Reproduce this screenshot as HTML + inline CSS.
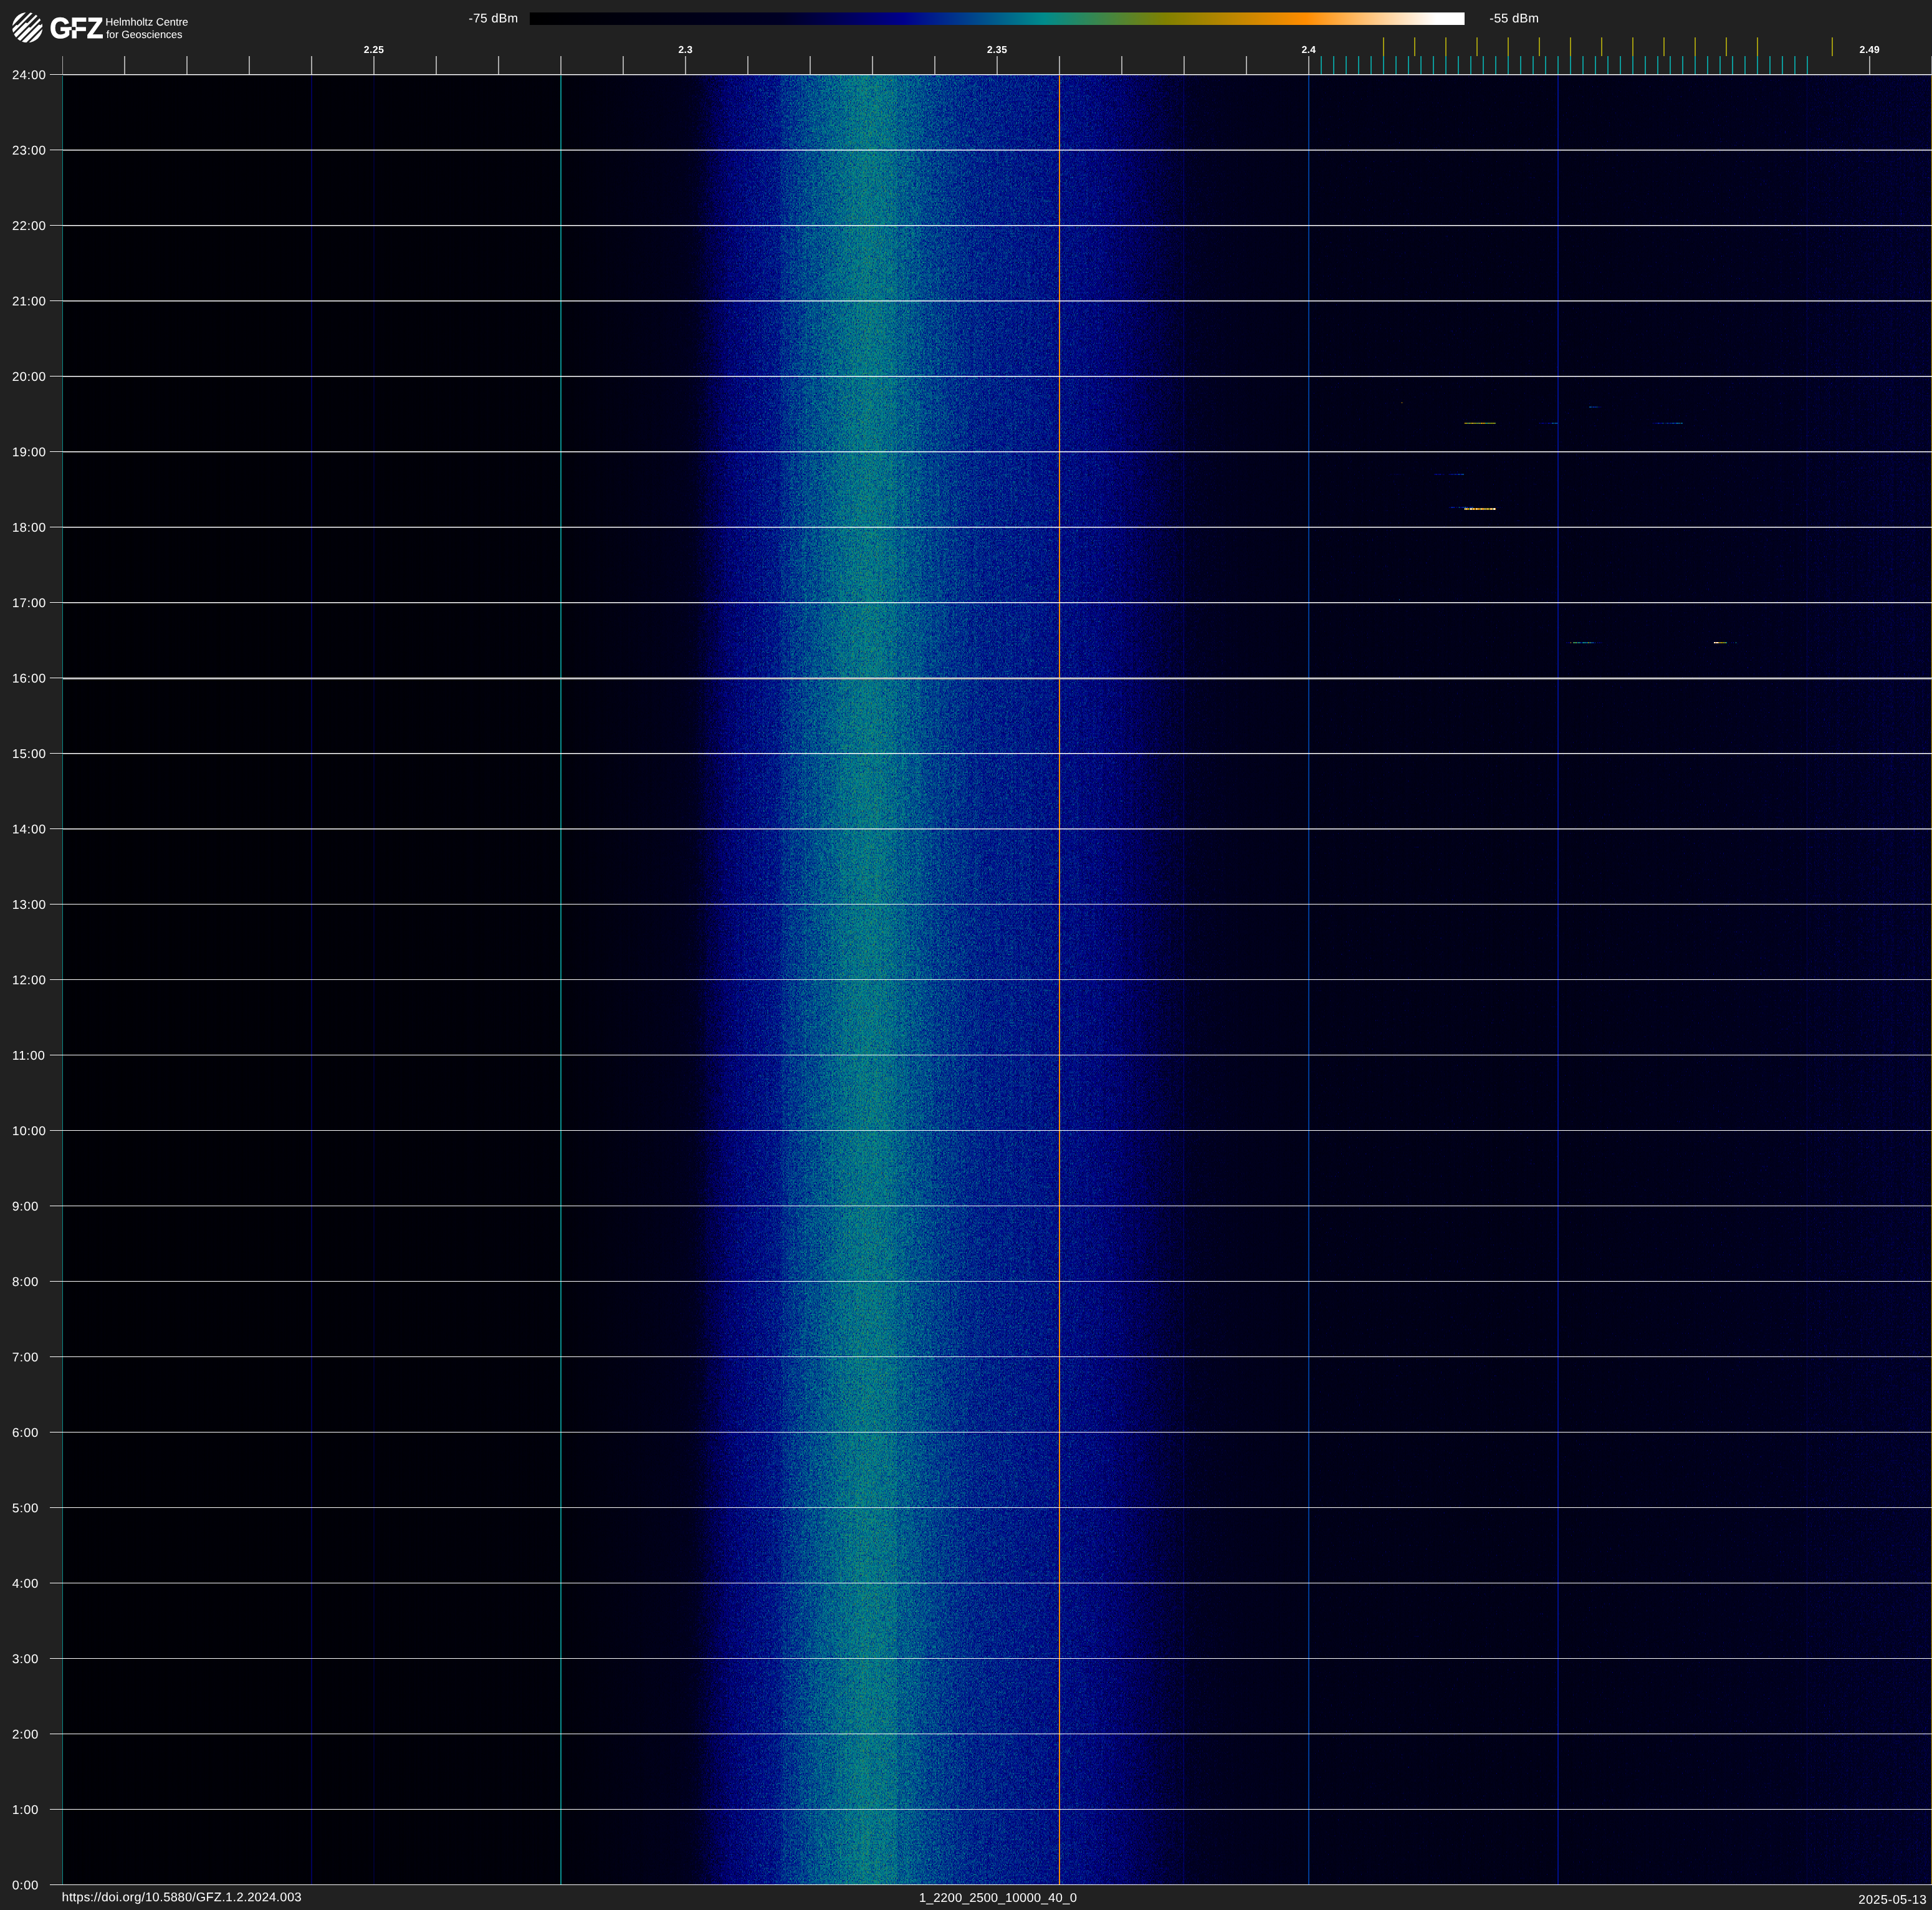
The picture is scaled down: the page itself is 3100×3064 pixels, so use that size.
<!DOCTYPE html>
<html lang="en"><head><meta charset="utf-8"><title>Spectrogram 1_2200_2500_10000_40_0 2025-05-13</title>
<style>html,body{margin:0;padding:0;background:#212121}body{width:3100px;height:3064px;overflow:hidden}svg{display:block}text{font-family:"Liberation Sans", sans-serif;fill:#fff;text-rendering:geometricPrecision}</style></head><body>
<svg width="3100" height="3064" viewBox="0 0 3100 3064">
<defs>
<linearGradient id="cb" x1="0" y1="0" x2="1" y2="0">
<stop offset="0.0000" stop-color="#000000"/>
<stop offset="0.2700" stop-color="#000024"/>
<stop offset="0.4000" stop-color="#00008b"/>
<stop offset="0.5500" stop-color="#008b8b"/>
<stop offset="0.6800" stop-color="#808000"/>
<stop offset="0.8300" stop-color="#ff8c00"/>
<stop offset="0.9700" stop-color="#ffffff"/>
<stop offset="1.0000" stop-color="#ffffff"/>
</linearGradient>
<linearGradient id="prof" gradientUnits="userSpaceOnUse" x1="100" y1="0" x2="3100" y2="0">
<stop offset="0.00000" stop-color="rgb(1,20,153)"/>
<stop offset="0.13333" stop-color="rgb(2,26,153)"/>
<stop offset="0.26667" stop-color="rgb(3,51,178)"/>
<stop offset="0.28333" stop-color="rgb(6,76,178)"/>
<stop offset="0.30000" stop-color="rgb(8,115,178)"/>
<stop offset="0.32667" stop-color="rgb(9,178,178)"/>
<stop offset="0.33733" stop-color="rgb(12,230,128)"/>
<stop offset="0.34667" stop-color="rgb(26,255,128)"/>
<stop offset="0.35800" stop-color="rgb(41,255,128)"/>
<stop offset="0.37000" stop-color="rgb(48,255,128)"/>
<stop offset="0.38367" stop-color="rgb(54,255,128)"/>
<stop offset="0.38500" stop-color="rgb(59,255,128)"/>
<stop offset="0.40000" stop-color="rgb(69,255,128)"/>
<stop offset="0.41333" stop-color="rgb(76,255,128)"/>
<stop offset="0.42833" stop-color="rgb(83,255,128)"/>
<stop offset="0.44600" stop-color="rgb(79,255,128)"/>
<stop offset="0.44700" stop-color="rgb(73,255,128)"/>
<stop offset="0.44867" stop-color="rgb(73,255,128)"/>
<stop offset="0.44967" stop-color="rgb(75,255,128)"/>
<stop offset="0.46667" stop-color="rgb(66,255,128)"/>
<stop offset="0.48267" stop-color="rgb(60,255,128)"/>
<stop offset="0.48367" stop-color="rgb(59,255,128)"/>
<stop offset="0.50000" stop-color="rgb(56,255,128)"/>
<stop offset="0.53333" stop-color="rgb(50,255,128)"/>
<stop offset="0.55000" stop-color="rgb(46,255,128)"/>
<stop offset="0.56667" stop-color="rgb(38,255,128)"/>
<stop offset="0.58333" stop-color="rgb(27,255,128)"/>
<stop offset="0.59933" stop-color="rgb(21,230,128)"/>
<stop offset="0.60033" stop-color="rgb(20,217,128)"/>
<stop offset="0.61667" stop-color="rgb(15,204,153)"/>
<stop offset="0.63333" stop-color="rgb(12,178,178)"/>
<stop offset="0.66667" stop-color="rgb(10,140,204)"/>
<stop offset="0.80000" stop-color="rgb(8,140,204)"/>
<stop offset="0.86667" stop-color="rgb(10,166,204)"/>
<stop offset="0.90000" stop-color="rgb(13,178,204)"/>
<stop offset="0.93300" stop-color="rgb(14,191,204)"/>
<stop offset="0.93367" stop-color="rgb(15,204,204)"/>
<stop offset="0.96667" stop-color="rgb(18,204,204)"/>
<stop offset="1.00000" stop-color="rgb(20,204,204)"/>
</linearGradient>
<filter id="spec" filterUnits="userSpaceOnUse" x="100" y="120" width="3000" height="2903" color-interpolation-filters="sRGB">
<feColorMatrix in="SourceGraphic" type="matrix" values="1 0 0 0 0 1 0 0 0 0 1 0 0 0 0 0 0 0 0 1" result="P"/>
<feColorMatrix in="SourceGraphic" type="matrix" values="0 1 0 0 0 0 1 0 0 0 0 1 0 0 0 0 0 0 0 1" result="Am"/>
<feTurbulence type="fractalNoise" baseFrequency="1.618 0.809" numOctaves="1" seed="7" result="n"/>
<feColorMatrix in="n" type="matrix" values="1 0 0 0 0 1 0 0 0 0 1 0 0 0 0 0 0 0 0 1" result="n1"/>
<feFlood flood-color="#fff" x="100" y="120" width="1" height="1" result="d"/>
<feOffset in="d" dx="0" dy="0" x="100" y="120" width="1" height="2" result="cell"/>
<feTile in="cell" result="mask"/>
<feComposite in="n1" in2="mask" operator="in" result="nm"/>
<feOffset in="nm" dy="1" result="nm2"/>
<feMerge result="ng"><feMergeNode in="nm"/><feMergeNode in="nm2"/></feMerge>
<feTurbulence type="fractalNoise" baseFrequency="0.37 0.0004" numOctaves="2" seed="3" result="s"/>
<feColorMatrix in="s" type="matrix" values="1 0 0 0 0 1 0 0 0 0 1 0 0 0 0 0 0 0 0 1" result="sg"/>
<feComposite in="Am" in2="ng" operator="arithmetic" k1="0.370" k2="0" k3="0" k4="0" result="an"/>
<feComposite in="P" in2="an" operator="arithmetic" k1="0" k2="1" k3="1" k4="0" result="v0"/>
<feColorMatrix in="SourceGraphic" type="matrix" values="0 0 1 0 0 0 0 1 0 0 0 0 1 0 0 0 0 0 0 1" result="Sm"/>
<feComposite in="Sm" in2="sg" operator="arithmetic" k1="0.100" k2="0" k3="0" k4="0" result="as"/>
<feComposite in="v0" in2="as" operator="arithmetic" k1="0" k2="1" k3="1" k4="0" result="v"/>
<feComponentTransfer in="v"><feFuncR type="table" tableValues="0.0000 0.0000 0.0000 0.0000 0.0000 0.0000 0.0000 0.0000 0.0000 0.0000 0.0000 0.0000 0.0000 0.0000 0.0000 0.0000 0.0000 0.0000 0.0000 0.0000 0.0000 0.0000 0.0000 0.0000 0.0000 0.0000 0.0000 0.0000 0.0000 0.0000 0.0000 0.0000 0.0000 0.0000 0.0000 0.0000 0.0000 0.0000 0.0000 0.0000 0.0000 0.0000 0.0000 0.0000 0.0000 0.0000 0.0000 0.0000 0.0000 0.0000 0.0000 0.0000 0.0000 0.0000 0.0000 0.0000 0.0386 0.0772 0.1158 0.1544 0.1931 0.2317 0.2703 0.3089 0.3475 0.3861 0.4247 0.4633 0.5020 0.5352 0.5684 0.6016 0.6348 0.6680 0.7012 0.7344 0.7676 0.8008 0.8340 0.8672 0.9004 0.9336 0.9668 1.0000 1.0000 1.0000 1.0000 1.0000 1.0000 1.0000 1.0000 1.0000 1.0000 1.0000 1.0000 1.0000 1.0000 1.0000 1.0000 1.0000 1.0000"/><feFuncG type="table" tableValues="0.0000 0.0000 0.0000 0.0000 0.0000 0.0000 0.0000 0.0000 0.0000 0.0000 0.0000 0.0000 0.0000 0.0000 0.0000 0.0000 0.0000 0.0000 0.0000 0.0000 0.0000 0.0000 0.0000 0.0000 0.0000 0.0000 0.0000 0.0000 0.0000 0.0000 0.0000 0.0000 0.0000 0.0000 0.0000 0.0000 0.0000 0.0000 0.0000 0.0000 0.0000 0.0363 0.0727 0.1090 0.1454 0.1817 0.2180 0.2544 0.2907 0.3271 0.3634 0.3997 0.4361 0.4724 0.5088 0.5451 0.5418 0.5385 0.5351 0.5318 0.5285 0.5252 0.5219 0.5186 0.5152 0.5119 0.5086 0.5053 0.5020 0.5051 0.5082 0.5114 0.5145 0.5176 0.5208 0.5239 0.5271 0.5302 0.5333 0.5365 0.5396 0.5427 0.5459 0.5490 0.5812 0.6134 0.6457 0.6779 0.7101 0.7423 0.7745 0.8067 0.8389 0.8711 0.9034 0.9356 0.9678 1.0000 1.0000 1.0000 1.0000"/><feFuncB type="table" tableValues="0.0000 0.0052 0.0105 0.0157 0.0209 0.0261 0.0314 0.0366 0.0418 0.0471 0.0523 0.0575 0.0627 0.0680 0.0732 0.0784 0.0837 0.0889 0.0941 0.0993 0.1046 0.1098 0.1150 0.1203 0.1255 0.1307 0.1359 0.1412 0.1722 0.2033 0.2344 0.2655 0.2965 0.3276 0.3587 0.3897 0.4208 0.4519 0.4830 0.5140 0.5451 0.5451 0.5451 0.5451 0.5451 0.5451 0.5451 0.5451 0.5451 0.5451 0.5451 0.5451 0.5451 0.5451 0.5451 0.5451 0.5032 0.4612 0.4193 0.3774 0.3354 0.2935 0.2516 0.2097 0.1677 0.1258 0.0839 0.0419 0.0000 0.0000 0.0000 0.0000 0.0000 0.0000 0.0000 0.0000 0.0000 0.0000 0.0000 0.0000 0.0000 0.0000 0.0000 0.0000 0.0714 0.1429 0.2143 0.2857 0.3571 0.4286 0.5000 0.5714 0.6429 0.7143 0.7857 0.8571 0.9286 1.0000 1.0000 1.0000 1.0000"/></feComponentTransfer>
</filter>
<linearGradient id="spg" gradientUnits="userSpaceOnUse" x1="2100" y1="0" x2="3100" y2="0">
<stop offset="0.0000" stop-color="#fff" stop-opacity="0.00"/>
<stop offset="0.0100" stop-color="#fff" stop-opacity="0.60"/>
<stop offset="0.5500" stop-color="#fff" stop-opacity="0.60"/>
<stop offset="0.7000" stop-color="#fff" stop-opacity="0.85"/>
<stop offset="0.7990" stop-color="#fff" stop-opacity="0.95"/>
<stop offset="0.8010" stop-color="#fff" stop-opacity="1.00"/>
<stop offset="1.0000" stop-color="#fff" stop-opacity="1.00"/>
</linearGradient>
<filter id="speck" filterUnits="userSpaceOnUse" x="2100" y="120" width="1000" height="2903" color-interpolation-filters="sRGB">
<feTurbulence type="fractalNoise" baseFrequency="1.618 0.809" numOctaves="1" seed="23" result="n"/>
<feColorMatrix in="n" type="matrix" values="0 0 0 0 0  0 0 0 0 0  0 0 0 0 0.6  8 0 0 0 -5.6" result="c"/>
<feFlood flood-color="#fff" x="2100" y="120" width="1" height="1" result="d"/>
<feOffset in="d" dx="0" dy="0" x="2100" y="120" width="1" height="2" result="cell"/>
<feTile in="cell" result="mask"/>
<feComposite in="c" in2="mask" operator="in" result="cm"/>
<feOffset in="cm" dy="1" result="cm2"/>
<feMerge result="cc"><feMergeNode in="cm"/><feMergeNode in="cm2"/></feMerge>
<feComposite in="cc" in2="SourceGraphic" operator="in"/>
</filter>
<clipPath id="lc"><circle cx="44" cy="44" r="24.3"/></clipPath>
</defs>
<rect x="100" y="120" width="3000" height="2903" fill="url(#prof)" filter="url(#spec)"/>
<rect x="2100" y="120" width="1000" height="2903" fill="url(#spg)" filter="url(#speck)"/>
<rect x="100" y="121" width="1" height="2902" fill="#0a8c8c"/>
<rect x="499" y="121" width="2" height="2902" fill="#00005a"/>
<rect x="599" y="121" width="2" height="2902" fill="#000030"/>
<rect x="899" y="121" width="2" height="2902" fill="#0a8f8f"/>
<rect x="1699" y="121" width="2" height="2902" fill="#f08c00"/>
<rect x="1899" y="121" width="1" height="2902" fill="#000078"/>
<rect x="2099" y="121" width="2" height="2902" fill="#003c96"/>
<rect x="2499" y="121" width="2" height="2902" fill="#000f8c"/>
<rect x="2899" y="121" width="1" height="2902" fill="#000050"/>
<rect x="3099" y="121" width="1" height="2902" fill="#c8a000"/>
<rect x="2350" y="678" width="1" height="2" fill="#de8900"/>
<rect x="2351" y="678" width="1" height="2" fill="#75810c"/>
<rect x="2352" y="678" width="1" height="2" fill="#8a8100"/>
<rect x="2353" y="678" width="1" height="2" fill="#b78500"/>
<rect x="2354" y="678" width="1" height="2" fill="#1b896d"/>
<rect x="2355" y="678" width="1" height="2" fill="#8e8100"/>
<rect x="2356" y="678" width="1" height="2" fill="#028b89"/>
<rect x="2357" y="678" width="1" height="2" fill="#e58a00"/>
<rect x="2358" y="678" width="1" height="2" fill="#278861"/>
<rect x="2359" y="678" width="1" height="2" fill="#948200"/>
<rect x="2360" y="678" width="1" height="2" fill="#838000"/>
<rect x="2361" y="678" width="1" height="2" fill="#a18300"/>
<rect x="2362" y="678" width="1" height="2" fill="#ff9d25"/>
<rect x="2363" y="678" width="1" height="2" fill="#458540"/>
<rect x="2364" y="678" width="1" height="2" fill="#df8900"/>
<rect x="2365" y="678" width="1" height="2" fill="#39864d"/>
<rect x="2366" y="678" width="1" height="2" fill="#a18300"/>
<rect x="2367" y="678" width="1" height="2" fill="#938200"/>
<rect x="2368" y="678" width="1" height="2" fill="#68821a"/>
<rect x="2369" y="678" width="1" height="2" fill="#3a864c"/>
<rect x="2370" y="678" width="1" height="2" fill="#a08300"/>
<rect x="2371" y="678" width="1" height="2" fill="#00888b"/>
<rect x="2372" y="678" width="1" height="2" fill="#858100"/>
<rect x="2373" y="678" width="1" height="2" fill="#d78800"/>
<rect x="2374" y="678" width="1" height="2" fill="#268862"/>
<rect x="2375" y="678" width="1" height="2" fill="#408545"/>
<rect x="2376" y="678" width="1" height="2" fill="#c68700"/>
<rect x="2377" y="678" width="1" height="2" fill="#ff8d03"/>
<rect x="2378" y="678" width="1" height="2" fill="#788109"/>
<rect x="2379" y="678" width="1" height="2" fill="#b88500"/>
<rect x="2380" y="678" width="1" height="2" fill="#c88700"/>
<rect x="2381" y="678" width="1" height="2" fill="#8c8100"/>
<rect x="2382" y="678" width="1" height="2" fill="#cb8700"/>
<rect x="2383" y="678" width="1" height="2" fill="#328755"/>
<rect x="2384" y="678" width="1" height="2" fill="#3a864c"/>
<rect x="2385" y="678" width="1" height="2" fill="#038b88"/>
<rect x="2386" y="678" width="1" height="2" fill="#418544"/>
<rect x="2387" y="678" width="1" height="2" fill="#418545"/>
<rect x="2388" y="678" width="1" height="2" fill="#958200"/>
<rect x="2389" y="678" width="1" height="2" fill="#5f8324"/>
<rect x="2390" y="678" width="1" height="2" fill="#528432"/>
<rect x="2391" y="678" width="1" height="2" fill="#638320"/>
<rect x="2392" y="678" width="1" height="2" fill="#718110"/>
<rect x="2393" y="678" width="1" height="2" fill="#928200"/>
<rect x="2394" y="678" width="1" height="2" fill="#67821b"/>
<rect x="2395" y="678" width="1" height="2" fill="#6c8216"/>
<rect x="2396" y="678" width="1" height="2" fill="#8f8100"/>
<rect x="2397" y="678" width="1" height="2" fill="#b98500"/>
<rect x="2398" y="678" width="1" height="2" fill="#268862"/>
<rect x="2399" y="678" width="1" height="2" fill="#6a8218"/>
<rect x="2469" y="678" width="1" height="2" fill="#00002e"/>
<rect x="2470" y="678" width="1" height="2" fill="#00078b"/>
<rect x="2471" y="678" width="1" height="2" fill="#000023"/>
<rect x="2472" y="678" width="1" height="2" fill="#00004e"/>
<rect x="2473" y="678" width="1" height="2" fill="#000042"/>
<rect x="2474" y="678" width="1" height="2" fill="#000078"/>
<rect x="2475" y="678" width="1" height="2" fill="#00007d"/>
<rect x="2476" y="678" width="1" height="2" fill="#000069"/>
<rect x="2477" y="678" width="1" height="2" fill="#000061"/>
<rect x="2479" y="678" width="1" height="2" fill="#00007d"/>
<rect x="2480" y="678" width="1" height="2" fill="#000024"/>
<rect x="2481" y="678" width="1" height="2" fill="#00005f"/>
<rect x="2483" y="678" width="1" height="2" fill="#000054"/>
<rect x="2484" y="678" width="1" height="2" fill="#000d8b"/>
<rect x="2485" y="678" width="1" height="2" fill="#00007c"/>
<rect x="2486" y="678" width="1" height="2" fill="#000081"/>
<rect x="2488" y="678" width="1" height="2" fill="#000f8b"/>
<rect x="2489" y="678" width="1" height="2" fill="#000057"/>
<rect x="2490" y="678" width="1" height="2" fill="#00178b"/>
<rect x="2491" y="678" width="1" height="2" fill="#00808b"/>
<rect x="2492" y="678" width="1" height="2" fill="#005f8b"/>
<rect x="2494" y="678" width="1" height="2" fill="#00448b"/>
<rect x="2495" y="678" width="1" height="2" fill="#004e8b"/>
<rect x="2496" y="678" width="1" height="2" fill="#00428b"/>
<rect x="2497" y="678" width="1" height="2" fill="#00338b"/>
<rect x="2498" y="678" width="1" height="2" fill="#006b8b"/>
<rect x="2550" y="652" width="1" height="2" fill="#00578b"/>
<rect x="2551" y="652" width="1" height="2" fill="#00328b"/>
<rect x="2552" y="652" width="1" height="2" fill="#00618b"/>
<rect x="2553" y="652" width="1" height="2" fill="#00428b"/>
<rect x="2555" y="652" width="1" height="2" fill="#00258b"/>
<rect x="2556" y="652" width="1" height="2" fill="#002b8b"/>
<rect x="2557" y="652" width="1" height="2" fill="#002e8b"/>
<rect x="2558" y="652" width="1" height="2" fill="#000078"/>
<rect x="2559" y="652" width="1" height="2" fill="#002f8b"/>
<rect x="2560" y="652" width="1" height="2" fill="#00228b"/>
<rect x="2561" y="652" width="1" height="2" fill="#000040"/>
<rect x="2562" y="652" width="1" height="2" fill="#007b8b"/>
<rect x="2564" y="652" width="1" height="2" fill="#000049"/>
<rect x="2565" y="652" width="1" height="2" fill="#000075"/>
<rect x="2566" y="652" width="1" height="2" fill="#000029"/>
<rect x="2567" y="652" width="1" height="2" fill="#000069"/>
<rect x="2568" y="652" width="1" height="2" fill="#00002a"/>
<rect x="2569" y="652" width="1" height="2" fill="#000040"/>
<rect x="2652" y="678" width="1" height="2" fill="#00038b"/>
<rect x="2654" y="678" width="1" height="2" fill="#000062"/>
<rect x="2656" y="678" width="1" height="2" fill="#00008b"/>
<rect x="2657" y="678" width="1" height="2" fill="#000067"/>
<rect x="2658" y="678" width="1" height="2" fill="#00006b"/>
<rect x="2659" y="678" width="1" height="2" fill="#000054"/>
<rect x="2660" y="678" width="1" height="2" fill="#00328b"/>
<rect x="2661" y="678" width="1" height="2" fill="#00268b"/>
<rect x="2662" y="678" width="1" height="2" fill="#00068b"/>
<rect x="2663" y="678" width="1" height="2" fill="#000067"/>
<rect x="2664" y="678" width="1" height="2" fill="#000068"/>
<rect x="2665" y="678" width="1" height="2" fill="#000079"/>
<rect x="2666" y="678" width="1" height="2" fill="#00007b"/>
<rect x="2667" y="678" width="1" height="2" fill="#000067"/>
<rect x="2668" y="678" width="1" height="2" fill="#00828b"/>
<rect x="2671" y="678" width="1" height="2" fill="#000085"/>
<rect x="2673" y="678" width="1" height="2" fill="#002e8b"/>
<rect x="2675" y="678" width="1" height="2" fill="#004c8b"/>
<rect x="2676" y="678" width="1" height="2" fill="#00218b"/>
<rect x="2677" y="678" width="1" height="2" fill="#000059"/>
<rect x="2678" y="678" width="1" height="2" fill="#00138b"/>
<rect x="2680" y="678" width="1" height="2" fill="#003f8b"/>
<rect x="2681" y="678" width="1" height="2" fill="#00078b"/>
<rect x="2682" y="678" width="1" height="2" fill="#000073"/>
<rect x="2683" y="678" width="1" height="2" fill="#006b8b"/>
<rect x="2684" y="678" width="1" height="2" fill="#00006d"/>
<rect x="2685" y="678" width="1" height="2" fill="#00858b"/>
<rect x="2686" y="678" width="1" height="2" fill="#000088"/>
<rect x="2687" y="678" width="1" height="2" fill="#00218b"/>
<rect x="2688" y="678" width="1" height="2" fill="#000b8b"/>
<rect x="2689" y="678" width="1" height="2" fill="#00278b"/>
<rect x="2690" y="678" width="1" height="2" fill="#00778b"/>
<rect x="2691" y="678" width="1" height="2" fill="#006f8b"/>
<rect x="2692" y="678" width="1" height="2" fill="#003d8b"/>
<rect x="2693" y="678" width="1" height="2" fill="#005c8b"/>
<rect x="2694" y="678" width="1" height="2" fill="#000e8b"/>
<rect x="2695" y="678" width="1" height="2" fill="#348753"/>
<rect x="2697" y="678" width="1" height="2" fill="#00668b"/>
<rect x="2698" y="678" width="1" height="2" fill="#00528b"/>
<rect x="2699" y="678" width="1" height="2" fill="#00558b"/>
<rect x="2301" y="760" width="1" height="2" fill="#000055"/>
<rect x="2302" y="760" width="1" height="2" fill="#000064"/>
<rect x="2303" y="760" width="1" height="2" fill="#00006f"/>
<rect x="2304" y="760" width="1" height="2" fill="#00128b"/>
<rect x="2305" y="760" width="1" height="2" fill="#000081"/>
<rect x="2306" y="760" width="1" height="2" fill="#000040"/>
<rect x="2307" y="760" width="1" height="2" fill="#000063"/>
<rect x="2308" y="760" width="1" height="2" fill="#000069"/>
<rect x="2309" y="760" width="1" height="2" fill="#000057"/>
<rect x="2310" y="760" width="1" height="2" fill="#00148b"/>
<rect x="2311" y="760" width="1" height="2" fill="#000078"/>
<rect x="2312" y="760" width="1" height="2" fill="#000049"/>
<rect x="2314" y="760" width="1" height="2" fill="#00005a"/>
<rect x="2316" y="760" width="1" height="2" fill="#000080"/>
<rect x="2324" y="760" width="1" height="2" fill="#000038"/>
<rect x="2325" y="760" width="1" height="2" fill="#00048b"/>
<rect x="2327" y="760" width="1" height="2" fill="#000067"/>
<rect x="2328" y="760" width="1" height="2" fill="#00198b"/>
<rect x="2329" y="760" width="1" height="2" fill="#000052"/>
<rect x="2330" y="760" width="1" height="2" fill="#001e8b"/>
<rect x="2331" y="760" width="1" height="2" fill="#000054"/>
<rect x="2332" y="760" width="1" height="2" fill="#000059"/>
<rect x="2333" y="760" width="1" height="2" fill="#00248b"/>
<rect x="2335" y="760" width="1" height="2" fill="#00418b"/>
<rect x="2336" y="760" width="1" height="2" fill="#00007b"/>
<rect x="2337" y="760" width="1" height="2" fill="#00007d"/>
<rect x="2338" y="760" width="1" height="2" fill="#000076"/>
<rect x="2339" y="760" width="1" height="2" fill="#000082"/>
<rect x="2340" y="760" width="1" height="2" fill="#004b8b"/>
<rect x="2341" y="760" width="1" height="2" fill="#00578b"/>
<rect x="2342" y="760" width="1" height="2" fill="#000058"/>
<rect x="2343" y="760" width="1" height="2" fill="#000085"/>
<rect x="2344" y="760" width="1" height="2" fill="#001f8b"/>
<rect x="2345" y="760" width="1" height="2" fill="#002b8b"/>
<rect x="2346" y="760" width="1" height="2" fill="#004e8b"/>
<rect x="2347" y="760" width="1" height="2" fill="#002c8b"/>
<rect x="2348" y="760" width="1" height="2" fill="#00518b"/>
<rect x="2224" y="760" width="1" height="2" fill="#00001f"/>
<rect x="2225" y="760" width="1" height="2" fill="#000028"/>
<rect x="2230" y="760" width="1" height="2" fill="#000030"/>
<rect x="2231" y="760" width="1" height="2" fill="#00002a"/>
<rect x="2232" y="760" width="1" height="2" fill="#00002b"/>
<rect x="2233" y="760" width="1" height="2" fill="#000022"/>
<rect x="2236" y="760" width="1" height="2" fill="#000021"/>
<rect x="2237" y="760" width="1" height="2" fill="#00003c"/>
<rect x="2238" y="760" width="1" height="2" fill="#000033"/>
<rect x="2240" y="760" width="1" height="2" fill="#000051"/>
<rect x="2242" y="760" width="1" height="2" fill="#00004a"/>
<rect x="2243" y="760" width="1" height="2" fill="#00003c"/>
<rect x="2246" y="760" width="1" height="2" fill="#00004b"/>
<rect x="2350" y="815" width="1" height="3" fill="#ffffff"/>
<rect x="2351" y="815" width="1" height="3" fill="#de8900"/>
<rect x="2352" y="815" width="1" height="3" fill="#9e8300"/>
<rect x="2353" y="815" width="1" height="3" fill="#fff4e6"/>
<rect x="2354" y="815" width="1" height="3" fill="#c78700"/>
<rect x="2355" y="815" width="1" height="3" fill="#8f8100"/>
<rect x="2356" y="815" width="1" height="3" fill="#ff8e04"/>
<rect x="2357" y="815" width="1" height="3" fill="#458540"/>
<rect x="2358" y="815" width="1" height="3" fill="#628321"/>
<rect x="2359" y="815" width="1" height="3" fill="#ffffff"/>
<rect x="2360" y="815" width="1" height="3" fill="#ffae4a"/>
<rect x="2361" y="815" width="1" height="3" fill="#ffe7ca"/>
<rect x="2362" y="815" width="1" height="3" fill="#74810d"/>
<rect x="2363" y="815" width="1" height="3" fill="#ffa332"/>
<rect x="2364" y="815" width="1" height="3" fill="#ffc681"/>
<rect x="2365" y="815" width="1" height="3" fill="#ff9310"/>
<rect x="2366" y="815" width="1" height="3" fill="#c48600"/>
<rect x="2367" y="815" width="1" height="3" fill="#7b8006"/>
<rect x="2368" y="815" width="1" height="3" fill="#f58b00"/>
<rect x="2369" y="815" width="1" height="3" fill="#ffffff"/>
<rect x="2370" y="815" width="1" height="3" fill="#bd8600"/>
<rect x="2371" y="815" width="1" height="3" fill="#ffb050"/>
<rect x="2372" y="815" width="1" height="3" fill="#ce8700"/>
<rect x="2373" y="815" width="1" height="3" fill="#c48600"/>
<rect x="2374" y="815" width="1" height="3" fill="#aa8400"/>
<rect x="2375" y="815" width="1" height="3" fill="#798108"/>
<rect x="2376" y="815" width="1" height="3" fill="#ffffff"/>
<rect x="2377" y="815" width="1" height="3" fill="#c48600"/>
<rect x="2378" y="815" width="1" height="3" fill="#f18b00"/>
<rect x="2379" y="815" width="1" height="3" fill="#ffba65"/>
<rect x="2380" y="815" width="1" height="3" fill="#eb8a00"/>
<rect x="2381" y="815" width="1" height="3" fill="#4f8436"/>
<rect x="2382" y="815" width="1" height="3" fill="#ffb458"/>
<rect x="2383" y="815" width="1" height="3" fill="#4f8435"/>
<rect x="2384" y="815" width="1" height="3" fill="#ffa12f"/>
<rect x="2385" y="815" width="1" height="3" fill="#5c8327"/>
<rect x="2386" y="815" width="1" height="3" fill="#cd8700"/>
<rect x="2387" y="815" width="1" height="3" fill="#ffce92"/>
<rect x="2388" y="815" width="1" height="3" fill="#928200"/>
<rect x="2389" y="815" width="1" height="3" fill="#9e8300"/>
<rect x="2390" y="815" width="1" height="3" fill="#55842f"/>
<rect x="2391" y="815" width="1" height="3" fill="#ff8f07"/>
<rect x="2392" y="815" width="1" height="3" fill="#ffffff"/>
<rect x="2393" y="815" width="1" height="3" fill="#e98a00"/>
<rect x="2394" y="815" width="1" height="3" fill="#ffad48"/>
<rect x="2395" y="815" width="1" height="3" fill="#188971"/>
<rect x="2396" y="815" width="1" height="3" fill="#ffddb3"/>
<rect x="2397" y="815" width="1" height="3" fill="#ffe6c7"/>
<rect x="2398" y="815" width="1" height="3" fill="#ffffff"/>
<rect x="2399" y="815" width="1" height="3" fill="#fe8c00"/>
<rect x="2325" y="813" width="1" height="2" fill="#000082"/>
<rect x="2327" y="813" width="1" height="2" fill="#000045"/>
<rect x="2328" y="813" width="1" height="2" fill="#00007d"/>
<rect x="2329" y="813" width="1" height="2" fill="#003e8b"/>
<rect x="2330" y="813" width="1" height="2" fill="#001d8b"/>
<rect x="2331" y="813" width="1" height="2" fill="#00108b"/>
<rect x="2332" y="813" width="1" height="2" fill="#00088b"/>
<rect x="2333" y="813" width="1" height="2" fill="#001a8b"/>
<rect x="2334" y="813" width="1" height="2" fill="#00004d"/>
<rect x="2336" y="813" width="1" height="2" fill="#00004b"/>
<rect x="2337" y="813" width="1" height="2" fill="#00006a"/>
<rect x="2339" y="813" width="1" height="2" fill="#000052"/>
<rect x="2340" y="813" width="1" height="2" fill="#000036"/>
<rect x="2341" y="813" width="1" height="2" fill="#00828b"/>
<rect x="2343" y="813" width="1" height="2" fill="#000077"/>
<rect x="2344" y="813" width="1" height="2" fill="#00007c"/>
<rect x="2345" y="813" width="1" height="2" fill="#000064"/>
<rect x="2346" y="813" width="1" height="2" fill="#00248b"/>
<rect x="2347" y="813" width="1" height="2" fill="#00088b"/>
<rect x="2348" y="813" width="1" height="2" fill="#003a8b"/>
<rect x="2349" y="813" width="1" height="2" fill="#00003b"/>
<rect x="2350" y="813" width="1" height="2" fill="#00698b"/>
<rect x="2351" y="813" width="1" height="2" fill="#00638b"/>
<rect x="2352" y="813" width="1" height="2" fill="#00158b"/>
<rect x="2353" y="813" width="1" height="2" fill="#000077"/>
<rect x="2354" y="813" width="1" height="2" fill="#00338b"/>
<rect x="2355" y="813" width="1" height="2" fill="#00007e"/>
<rect x="2357" y="813" width="1" height="2" fill="#000024"/>
<rect x="2358" y="813" width="1" height="2" fill="#00228b"/>
<rect x="2359" y="813" width="1" height="2" fill="#000065"/>
<rect x="2360" y="813" width="1" height="2" fill="#003b8b"/>
<rect x="2361" y="813" width="1" height="2" fill="#000068"/>
<rect x="2362" y="813" width="1" height="2" fill="#00478b"/>
<rect x="2363" y="813" width="1" height="2" fill="#002d8b"/>
<rect x="2401" y="813" width="1" height="2" fill="#00002e"/>
<rect x="2403" y="813" width="1" height="2" fill="#000059"/>
<rect x="2405" y="813" width="1" height="2" fill="#000036"/>
<rect x="2407" y="813" width="1" height="2" fill="#000047"/>
<rect x="2410" y="813" width="1" height="2" fill="#000038"/>
<rect x="2251" y="813" width="1" height="2" fill="#000051"/>
<rect x="2255" y="813" width="1" height="2" fill="#000034"/>
<rect x="2256" y="813" width="1" height="2" fill="#000028"/>
<rect x="2513" y="1030" width="1" height="2" fill="#00007a"/>
<rect x="2514" y="1030" width="1" height="2" fill="#000035"/>
<rect x="2515" y="1030" width="1" height="2" fill="#000043"/>
<rect x="2516" y="1030" width="1" height="2" fill="#00003d"/>
<rect x="2517" y="1030" width="1" height="2" fill="#00008a"/>
<rect x="2518" y="1030" width="1" height="2" fill="#000021"/>
<rect x="2519" y="1030" width="1" height="2" fill="#000051"/>
<rect x="2520" y="1030" width="1" height="2" fill="#00298b"/>
<rect x="2524" y="1030" width="1" height="2" fill="#2f8758"/>
<rect x="2525" y="1030" width="1" height="2" fill="#3d8649"/>
<rect x="2526" y="1030" width="1" height="2" fill="#5b8328"/>
<rect x="2527" y="1030" width="1" height="2" fill="#058b85"/>
<rect x="2528" y="1030" width="1" height="2" fill="#1e886a"/>
<rect x="2529" y="1030" width="1" height="2" fill="#788109"/>
<rect x="2530" y="1030" width="1" height="2" fill="#228866"/>
<rect x="2531" y="1030" width="1" height="2" fill="#00138b"/>
<rect x="2532" y="1030" width="1" height="2" fill="#238865"/>
<rect x="2533" y="1030" width="1" height="2" fill="#007d8b"/>
<rect x="2534" y="1030" width="1" height="2" fill="#338754"/>
<rect x="2535" y="1030" width="1" height="2" fill="#00268b"/>
<rect x="2536" y="1030" width="1" height="2" fill="#004f8b"/>
<rect x="2537" y="1030" width="1" height="2" fill="#00006a"/>
<rect x="2538" y="1030" width="1" height="2" fill="#00006d"/>
<rect x="2539" y="1030" width="1" height="2" fill="#00698b"/>
<rect x="2540" y="1030" width="1" height="2" fill="#0a8a80"/>
<rect x="2541" y="1030" width="1" height="2" fill="#018b8a"/>
<rect x="2542" y="1030" width="1" height="2" fill="#00578b"/>
<rect x="2543" y="1030" width="1" height="2" fill="#2b875c"/>
<rect x="2544" y="1030" width="1" height="2" fill="#00548b"/>
<rect x="2545" y="1030" width="1" height="2" fill="#00448b"/>
<rect x="2546" y="1030" width="1" height="2" fill="#00578b"/>
<rect x="2547" y="1030" width="1" height="2" fill="#007f8b"/>
<rect x="2548" y="1030" width="1" height="2" fill="#76810b"/>
<rect x="2549" y="1030" width="1" height="2" fill="#5f8324"/>
<rect x="2550" y="1030" width="1" height="2" fill="#00368b"/>
<rect x="2551" y="1030" width="1" height="2" fill="#4b853a"/>
<rect x="2552" y="1030" width="1" height="2" fill="#007b8b"/>
<rect x="2553" y="1030" width="1" height="2" fill="#00058b"/>
<rect x="2554" y="1030" width="1" height="2" fill="#198970"/>
<rect x="2555" y="1030" width="1" height="2" fill="#000080"/>
<rect x="2556" y="1030" width="1" height="2" fill="#00678b"/>
<rect x="2557" y="1030" width="1" height="2" fill="#000083"/>
<rect x="2559" y="1030" width="1" height="2" fill="#002c8b"/>
<rect x="2563" y="1030" width="1" height="2" fill="#00007e"/>
<rect x="2564" y="1030" width="1" height="2" fill="#000040"/>
<rect x="2565" y="1030" width="1" height="2" fill="#000021"/>
<rect x="2566" y="1030" width="1" height="2" fill="#000075"/>
<rect x="2567" y="1030" width="1" height="2" fill="#000065"/>
<rect x="2569" y="1030" width="1" height="2" fill="#000061"/>
<rect x="2570" y="1030" width="1" height="2" fill="#000021"/>
<rect x="2571" y="1030" width="1" height="2" fill="#000034"/>
<rect x="2750" y="1030" width="1" height="2" fill="#ffead0"/>
<rect x="2751" y="1030" width="1" height="2" fill="#ffffff"/>
<rect x="2752" y="1030" width="1" height="2" fill="#ffa639"/>
<rect x="2753" y="1030" width="1" height="2" fill="#ffce93"/>
<rect x="2754" y="1030" width="1" height="2" fill="#ffe3c1"/>
<rect x="2755" y="1030" width="1" height="2" fill="#fffcf9"/>
<rect x="2756" y="1030" width="1" height="2" fill="#ffc783"/>
<rect x="2757" y="1030" width="1" height="2" fill="#ffb04f"/>
<rect x="2758" y="1030" width="1" height="2" fill="#48853d"/>
<rect x="2759" y="1030" width="1" height="2" fill="#c48600"/>
<rect x="2760" y="1030" width="1" height="2" fill="#3c8649"/>
<rect x="2761" y="1030" width="1" height="2" fill="#ee8a00"/>
<rect x="2762" y="1030" width="1" height="2" fill="#7d8003"/>
<rect x="2763" y="1030" width="1" height="2" fill="#878100"/>
<rect x="2764" y="1030" width="1" height="2" fill="#73810f"/>
<rect x="2765" y="1030" width="1" height="2" fill="#a58300"/>
<rect x="2766" y="1030" width="1" height="2" fill="#57842c"/>
<rect x="2767" y="1030" width="1" height="2" fill="#38864e"/>
<rect x="2768" y="1030" width="1" height="2" fill="#bc8600"/>
<rect x="2769" y="1030" width="1" height="2" fill="#1f8869"/>
<rect x="2770" y="1030" width="1" height="2" fill="#008a8b"/>
<rect x="2778" y="1030" width="1" height="2" fill="#00007c"/>
<rect x="2781" y="1030" width="1" height="2" fill="#00078b"/>
<rect x="2783" y="1030" width="1" height="2" fill="#00001b"/>
<rect x="2785" y="1030" width="1" height="2" fill="#028b89"/>
<rect x="2520" y="1030" width="1" height="2" fill="#bb8600"/>
<rect x="2249" y="645" width="1" height="2" fill="#bb8600"/>
<rect x="2245" y="961" width="1" height="2" fill="#005d8b"/>
<rect x="2245" y="1085" width="1" height="2" fill="#00008b"/>
<rect x="2245" y="228" width="1" height="2" fill="#00006b"/>
<rect x="2245" y="546" width="1" height="2" fill="#00006b"/>
<rect x="2250" y="373" width="1" height="2" fill="#00006b"/>
<rect x="2555" y="818" width="1" height="2" fill="#00006b"/>
<rect x="2245" y="2190" width="1" height="2" fill="#00006b"/>
<rect x="2245" y="2770" width="1" height="2" fill="#000054"/>
<rect x="80" y="119" width="3020" height="1" fill="#fff"/>
<rect x="101" y="120" width="2999" height="1" fill="#fff" fill-opacity="0.5"/>
<rect x="80" y="240" width="3020" height="1" fill="#fff"/>
<rect x="101" y="241" width="2999" height="1" fill="#fff" fill-opacity="0.5"/>
<rect x="80" y="361" width="3020" height="1" fill="#fff"/>
<rect x="101" y="362" width="2999" height="1" fill="#fff" fill-opacity="0.5"/>
<rect x="80" y="482" width="3020" height="1" fill="#fff"/>
<rect x="101" y="483" width="2999" height="1" fill="#fff" fill-opacity="0.5"/>
<rect x="80" y="603" width="3020" height="1" fill="#fff"/>
<rect x="101" y="604" width="2999" height="1" fill="#fff" fill-opacity="0.5"/>
<rect x="80" y="724" width="3020" height="1" fill="#fff"/>
<rect x="101" y="725" width="2999" height="1" fill="#fff" fill-opacity="0.5"/>
<rect x="80" y="845" width="3020" height="1" fill="#fff"/>
<rect x="101" y="846" width="2999" height="1" fill="#fff" fill-opacity="0.5"/>
<rect x="80" y="966" width="3020" height="1" fill="#fff"/>
<rect x="101" y="967" width="2999" height="1" fill="#fff" fill-opacity="0.5"/>
<rect x="80" y="1087" width="3020" height="1" fill="#fff"/>
<rect x="80" y="1208" width="3020" height="1" fill="#fff"/>
<rect x="101" y="1209" width="2999" height="1" fill="#fff" fill-opacity="0.5"/>
<rect x="80" y="1329" width="3020" height="1" fill="#fff"/>
<rect x="101" y="1330" width="2999" height="1" fill="#fff" fill-opacity="0.5"/>
<rect x="80" y="1450" width="3020" height="1" fill="#fff"/>
<rect x="80" y="1571" width="3020" height="1" fill="#fff"/>
<rect x="80" y="1692" width="3020" height="1" fill="#fff"/>
<rect x="80" y="1813" width="3020" height="1" fill="#fff"/>
<rect x="80" y="1934" width="3020" height="1" fill="#fff"/>
<rect x="80" y="2055" width="3020" height="1" fill="#fff"/>
<rect x="80" y="2176" width="3020" height="1" fill="#fff"/>
<rect x="80" y="2297" width="3020" height="1" fill="#fff"/>
<rect x="80" y="2418" width="3020" height="1" fill="#fff"/>
<rect x="80" y="2539" width="3020" height="1" fill="#fff"/>
<rect x="80" y="2660" width="3020" height="1" fill="#fff"/>
<rect x="80" y="2781" width="3020" height="1" fill="#fff"/>
<rect x="80" y="2902" width="3020" height="1" fill="#fff"/>
<rect x="80" y="3023" width="3020" height="1" fill="#fff"/>
<rect x="101" y="1088" width="2999" height="2" fill="#aaa"/>
<rect x="100" y="90" width="1" height="29" fill="#aaa"/>
<rect x="199" y="90" width="2" height="29" fill="#aaa"/>
<rect x="299" y="90" width="2" height="29" fill="#aaa"/>
<rect x="399" y="90" width="2" height="29" fill="#aaa"/>
<rect x="499" y="90" width="2" height="29" fill="#aaa"/>
<rect x="599" y="90" width="2" height="29" fill="#aaa"/>
<rect x="699" y="90" width="2" height="29" fill="#aaa"/>
<rect x="799" y="90" width="2" height="29" fill="#aaa"/>
<rect x="899" y="90" width="2" height="29" fill="#aaa"/>
<rect x="999" y="90" width="2" height="29" fill="#aaa"/>
<rect x="1099" y="90" width="2" height="29" fill="#aaa"/>
<rect x="1199" y="90" width="2" height="29" fill="#aaa"/>
<rect x="1299" y="90" width="2" height="29" fill="#aaa"/>
<rect x="1399" y="90" width="2" height="29" fill="#aaa"/>
<rect x="1499" y="90" width="2" height="29" fill="#aaa"/>
<rect x="1599" y="90" width="2" height="29" fill="#aaa"/>
<rect x="1699" y="90" width="2" height="29" fill="#aaa"/>
<rect x="1799" y="90" width="2" height="29" fill="#aaa"/>
<rect x="1899" y="90" width="2" height="29" fill="#aaa"/>
<rect x="1999" y="90" width="2" height="29" fill="#aaa"/>
<rect x="2099" y="90" width="2" height="29" fill="#aaa"/>
<rect x="2999" y="90" width="2" height="29" fill="#aaa"/>
<rect x="3099" y="90" width="2" height="29" fill="#aaa"/>
<rect x="2119" y="90" width="2" height="29" fill="#0c9a9a"/>
<rect x="2139" y="90" width="2" height="29" fill="#0c9a9a"/>
<rect x="2159" y="90" width="2" height="29" fill="#0c9a9a"/>
<rect x="2179" y="90" width="2" height="29" fill="#0c9a9a"/>
<rect x="2199" y="90" width="2" height="29" fill="#0c9a9a"/>
<rect x="2219" y="90" width="2" height="29" fill="#0c9a9a"/>
<rect x="2239" y="90" width="2" height="29" fill="#0c9a9a"/>
<rect x="2259" y="90" width="2" height="29" fill="#0c9a9a"/>
<rect x="2279" y="90" width="2" height="29" fill="#0c9a9a"/>
<rect x="2299" y="90" width="2" height="29" fill="#0c9a9a"/>
<rect x="2319" y="90" width="2" height="29" fill="#0c9a9a"/>
<rect x="2339" y="90" width="2" height="29" fill="#0c9a9a"/>
<rect x="2359" y="90" width="2" height="29" fill="#0c9a9a"/>
<rect x="2379" y="90" width="2" height="29" fill="#0c9a9a"/>
<rect x="2399" y="90" width="2" height="29" fill="#0c9a9a"/>
<rect x="2419" y="90" width="2" height="29" fill="#0c9a9a"/>
<rect x="2439" y="90" width="2" height="29" fill="#0c9a9a"/>
<rect x="2459" y="90" width="2" height="29" fill="#0c9a9a"/>
<rect x="2479" y="90" width="2" height="29" fill="#0c9a9a"/>
<rect x="2499" y="90" width="2" height="29" fill="#0c9a9a"/>
<rect x="2519" y="90" width="2" height="29" fill="#0c9a9a"/>
<rect x="2539" y="90" width="2" height="29" fill="#0c9a9a"/>
<rect x="2559" y="90" width="2" height="29" fill="#0c9a9a"/>
<rect x="2579" y="90" width="2" height="29" fill="#0c9a9a"/>
<rect x="2599" y="90" width="2" height="29" fill="#0c9a9a"/>
<rect x="2619" y="90" width="2" height="29" fill="#0c9a9a"/>
<rect x="2639" y="90" width="2" height="29" fill="#0c9a9a"/>
<rect x="2659" y="90" width="2" height="29" fill="#0c9a9a"/>
<rect x="2679" y="90" width="2" height="29" fill="#0c9a9a"/>
<rect x="2699" y="90" width="2" height="29" fill="#0c9a9a"/>
<rect x="2719" y="90" width="2" height="29" fill="#0c9a9a"/>
<rect x="2739" y="90" width="2" height="29" fill="#0c9a9a"/>
<rect x="2759" y="90" width="2" height="29" fill="#0c9a9a"/>
<rect x="2779" y="90" width="2" height="29" fill="#0c9a9a"/>
<rect x="2799" y="90" width="2" height="29" fill="#0c9a9a"/>
<rect x="2819" y="90" width="2" height="29" fill="#0c9a9a"/>
<rect x="2839" y="90" width="2" height="29" fill="#0c9a9a"/>
<rect x="2859" y="90" width="2" height="29" fill="#0c9a9a"/>
<rect x="2879" y="90" width="2" height="29" fill="#0c9a9a"/>
<rect x="2899" y="90" width="2" height="29" fill="#0c9a9a"/>
<rect x="2219" y="60" width="2" height="30" fill="#a09a10"/>
<rect x="2269" y="60" width="2" height="30" fill="#a09a10"/>
<rect x="2319" y="60" width="2" height="30" fill="#a09a10"/>
<rect x="2369" y="60" width="2" height="30" fill="#a09a10"/>
<rect x="2419" y="60" width="2" height="30" fill="#a09a10"/>
<rect x="2469" y="60" width="2" height="30" fill="#a09a10"/>
<rect x="2519" y="60" width="2" height="30" fill="#a09a10"/>
<rect x="2569" y="60" width="2" height="30" fill="#a09a10"/>
<rect x="2619" y="60" width="2" height="30" fill="#a09a10"/>
<rect x="2669" y="60" width="2" height="30" fill="#a09a10"/>
<rect x="2719" y="60" width="2" height="30" fill="#a09a10"/>
<rect x="2769" y="60" width="2" height="30" fill="#a09a10"/>
<rect x="2819" y="60" width="2" height="30" fill="#a09a10"/>
<rect x="2939" y="60" width="2" height="30" fill="#a09a10"/>
<rect x="850" y="20" width="1500" height="20" fill="url(#cb)"/>
<g clip-path="url(#lc)"><g transform="translate(44 44) rotate(-45)" fill="#fff">
<rect x="-30" y="-30" width="60" height="11.2"/>
<polygon points="-30,-15.40 -9.70,-15.40 -8.50,-13.50 30,-13.50 30,-10.30 -30,-10.30"/>
<polygon points="-30,-7.40 3.50,-7.40 4.70,-4.75 30,-4.75 30,-1.53 -30,-1.53"/>
<polygon points="-30,1.40 2.05,1.40 3.25,3.60 30,3.60 30,6.96 -30,6.96"/>
<polygon points="-30,9.75 16.25,9.75 17.45,12.40 30,12.40 30,16.00 -30,16.00"/>
<rect x="-30" y="18.97" width="60" height="12"/>
</g></g>
<g opacity="0.999">
<text x="19.5" y="127.1" font-size="20.5" letter-spacing="0.65">24:00</text>
<text x="19.5" y="248.1" font-size="20.5" letter-spacing="0.65">23:00</text>
<text x="19.5" y="369.1" font-size="20.5" letter-spacing="0.65">22:00</text>
<text x="19.5" y="490.1" font-size="20.5" letter-spacing="0.65">21:00</text>
<text x="19.5" y="611.1" font-size="20.5" letter-spacing="0.65">20:00</text>
<text x="19.5" y="732.1" font-size="20.5" letter-spacing="0.65">19:00</text>
<text x="19.5" y="853.1" font-size="20.5" letter-spacing="0.65">18:00</text>
<text x="19.5" y="974.1" font-size="20.5" letter-spacing="0.65">17:00</text>
<text x="19.5" y="1095.1" font-size="20.5" letter-spacing="0.65">16:00</text>
<text x="19.5" y="1216.1" font-size="20.5" letter-spacing="0.65">15:00</text>
<text x="19.5" y="1337.1" font-size="20.5" letter-spacing="0.65">14:00</text>
<text x="19.5" y="1458.1" font-size="20.5" letter-spacing="0.65">13:00</text>
<text x="19.5" y="1579.1" font-size="20.5" letter-spacing="0.65">12:00</text>
<text x="19.5" y="1700.1" font-size="20.5" letter-spacing="0.65">11:00</text>
<text x="19.5" y="1821.1" font-size="20.5" letter-spacing="0.65">10:00</text>
<text x="19.5" y="1942.1" font-size="20.5" letter-spacing="0.65">9:00</text>
<text x="19.5" y="2063.1" font-size="20.5" letter-spacing="0.65">8:00</text>
<text x="19.5" y="2184.1" font-size="20.5" letter-spacing="0.65">7:00</text>
<text x="19.5" y="2305.1" font-size="20.5" letter-spacing="0.65">6:00</text>
<text x="19.5" y="2426.1" font-size="20.5" letter-spacing="0.65">5:00</text>
<text x="19.5" y="2547.1" font-size="20.5" letter-spacing="0.65">4:00</text>
<text x="19.5" y="2668.1" font-size="20.5" letter-spacing="0.65">3:00</text>
<text x="19.5" y="2789.1" font-size="20.5" letter-spacing="0.65">2:00</text>
<text x="19.5" y="2910.1" font-size="20.5" letter-spacing="0.65">1:00</text>
<text x="19.5" y="3031.1" font-size="20.5" letter-spacing="0.65">0:00</text>
<text x="600" y="85.2" font-size="16" font-weight="bold" letter-spacing="0.3" text-anchor="middle">2.25</text>
<text x="1100" y="85.2" font-size="16" font-weight="bold" letter-spacing="0.3" text-anchor="middle">2.3</text>
<text x="1600" y="85.2" font-size="16" font-weight="bold" letter-spacing="0.3" text-anchor="middle">2.35</text>
<text x="2100" y="85.2" font-size="16" font-weight="bold" letter-spacing="0.3" text-anchor="middle">2.4</text>
<text x="3000" y="85.2" font-size="16" font-weight="bold" letter-spacing="0.3" text-anchor="middle">2.49</text>
<text x="752" y="35.6" font-size="20.3" letter-spacing="0.4">-75 dBm</text>
<text x="2390" y="35.6" font-size="20.3" letter-spacing="0.4">-55 dBm</text>
<text x="80" y="60.9" font-size="46.6" font-weight="bold" stroke="#fff" stroke-width="1.2" textLength="85.5" lengthAdjust="spacingAndGlyphs">GFZ</text>
<rect x="110.5" y="43.2" width="4.6" height="5.2" fill="#fff"/>
<rect x="114.9" y="43.2" width="6.4" height="5.2" fill="#212121"/>
<text x="169.3" y="40.5" font-size="17.1" letter-spacing="0.05">Helmholtz Centre</text>
<text x="170.6" y="60.8" font-size="16.9">for Geosciences</text>
<text x="99.3" y="3050.3" font-size="20.2" letter-spacing="0.36">https://doi.org/10.5880/GFZ.1.2.2024.003</text>
<text x="1474.8" y="3050.7" font-size="20.2" letter-spacing="0.29">1_2200_2500_10000_40_0</text>
<text x="2982" y="3053.5" font-size="20.2" letter-spacing="0.66">2025-05-13</text>
</g>
</svg></body></html>
